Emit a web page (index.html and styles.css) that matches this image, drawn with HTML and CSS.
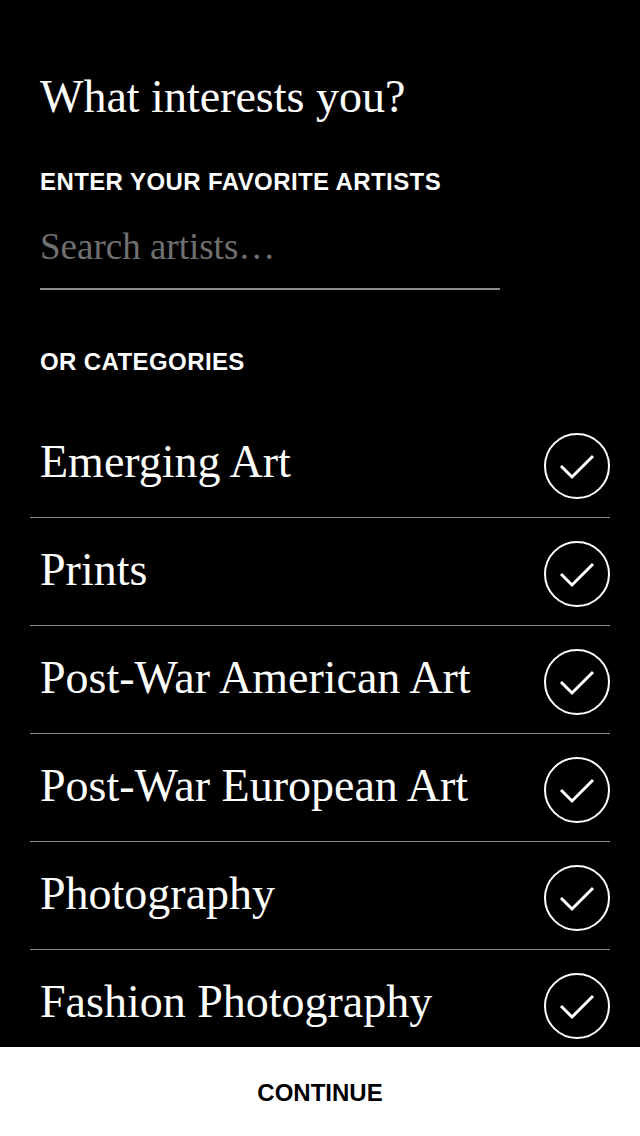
FILE: index.html
```html
<!DOCTYPE html>
<html lang="en">
<head>
    <meta charset="UTF-8">
    <meta name="viewport" content="width=device-width, initial-scale=1.0">
    <title>What interests you?</title>
    <link rel="stylesheet" href="styles.css">
</head>
<body>
    <div class="screen">
        <div class="content">
            <h1 class="title">What interests you?</h1>

            <h2 class="label label-artists">ENTER YOUR FAVORITE ARTISTS</h2>
            <input type="text" class="search" placeholder="Search artists…">

            <h2 class="label label-categories">OR CATEGORIES</h2>
            <ul class="categories">
                <li class="category">
                    <span class="category-name">Emerging Art</span>
                    <svg class="check" width="66" height="66" viewBox="0 0 66 66"><circle cx="33" cy="33" r="32" /><polyline points="17,33 28,44 49,23" /></svg>
                </li>
                <li class="category">
                    <span class="category-name">Prints</span>
                    <svg class="check" width="66" height="66" viewBox="0 0 66 66"><circle cx="33" cy="33" r="32" /><polyline points="17,33 28,44 49,23" /></svg>
                </li>
                <li class="category">
                    <span class="category-name">Post-War American Art</span>
                    <svg class="check" width="66" height="66" viewBox="0 0 66 66"><circle cx="33" cy="33" r="32" /><polyline points="17,33 28,44 49,23" /></svg>
                </li>
                <li class="category">
                    <span class="category-name">Post-War European Art</span>
                    <svg class="check" width="66" height="66" viewBox="0 0 66 66"><circle cx="33" cy="33" r="32" /><polyline points="17,33 28,44 49,23" /></svg>
                </li>
                <li class="category">
                    <span class="category-name">Photography</span>
                    <svg class="check" width="66" height="66" viewBox="0 0 66 66"><circle cx="33" cy="33" r="32" /><polyline points="17,33 28,44 49,23" /></svg>
                </li>
                <li class="category">
                    <span class="category-name">Fashion Photography</span>
                    <svg class="check" width="66" height="66" viewBox="0 0 66 66"><circle cx="33" cy="33" r="32" /><polyline points="17,33 28,44 49,23" /></svg>
                </li>
            </ul>
        </div>
        <button class="continue">CONTINUE</button>
    </div>
</body>
</html>
```

FILE: styles.css
```css
body {
    margin: 0;
    background: #000;
    color: #fff;
    font-family: "Liberation Serif", serif;
}
.screen {
    display: flex;
    flex-direction: column;
    height: 1136px;
}
.content {
    flex: 1;
    overflow: hidden;
}
.title {
    margin: 74px 0 0 40px;
    font-size: 46px;
    line-height: 46px;
    font-weight: normal;
}
.label {
    margin: 0 0 0 40px;
    font-family: "Liberation Sans", Arial, sans-serif;
    font-size: 24px;
    line-height: 24px;
    font-weight: bold;
    letter-spacing: 0.4px;
}
.label-artists { margin-top: 50px; }
.label-categories { margin-top: 60px; }
.search {
    display: block;
    box-sizing: content-box;
    width: 460px;
    height: 41px;
    margin: 32px 0 0 40px;
    padding: 0 0 21px;
    border: none;
    border-bottom: 2px solid #8c8c8c;
    background: transparent;
    color: #fff;
    font-family: "Liberation Serif", serif;
    font-size: 37px;
    outline: none;
}
.search::placeholder {
    color: #707070;
}
.categories {
    list-style: none;
    margin: 36px 30px 0;
    padding: 0;
}
.category {
    display: flex;
    align-items: center;
    justify-content: space-between;
    box-sizing: border-box;
    height: 108px;
    padding: 4px 0 0 10px;
    border-bottom: 1px solid #8c8c8c;
}
.category-name {
    font-size: 46px;
    line-height: 50px;
    padding-bottom: 8px;
}
.check {
    flex-shrink: 0;
    fill: none;
    stroke: #fff;
}
.check circle { stroke-width: 2; }
.check polyline { stroke-width: 3; }
.continue {
    flex-shrink: 0;
    height: 89px;
    padding: 2px 0 0;
    border: none;
    background: #fff;
    color: #000;
    font-family: "Liberation Sans", Arial, sans-serif;
    font-size: 24px;
    line-height: 24px;
    font-weight: bold;
    cursor: pointer;
}
```
